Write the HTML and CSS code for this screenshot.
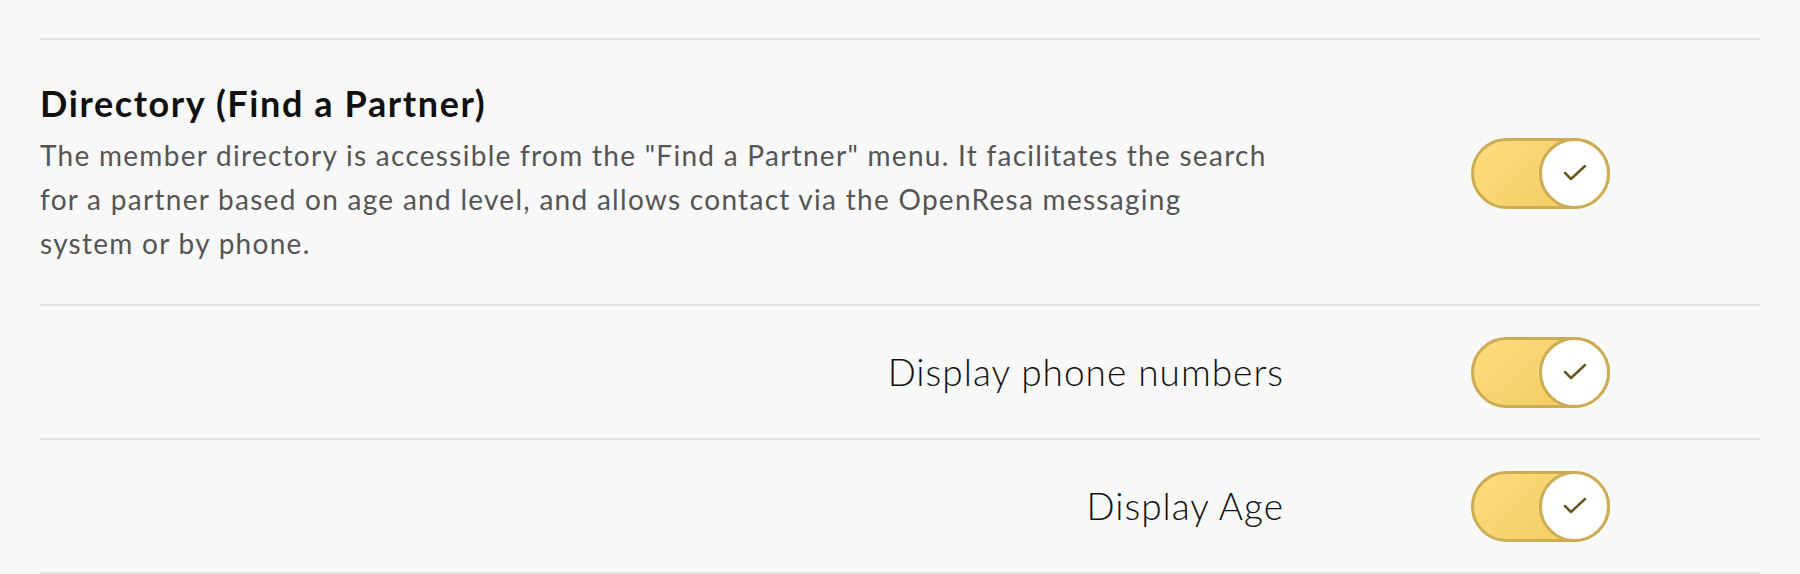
FILE: index.html
```html
<!DOCTYPE html>
<html lang="en">
<head>
<meta charset="utf-8">
<title>Directory settings</title>
<link rel="stylesheet" href="styles.css">
</head>
<body>
<div class="page">
  <section class="setting setting--main">
    <div class="setting__text">
      <h2 class="setting__title">Directory (Find a Partner)</h2>
      <p class="setting__desc">The member directory is accessible from the "Find a Partner" menu. It facilitates the search<br>for a partner based on age and level, and allows contact via the OpenResa messaging<br>system or by phone.</p>
    </div>
    <div class="switch" role="switch" aria-checked="true">
      <span class="switch__knob">
        <svg width="24" height="18" viewBox="0 0 24 18"><polyline points="2,9 8,15 22,2" fill="none" stroke="#6b5720" stroke-width="2.5" stroke-linecap="round" stroke-linejoin="round"/></svg>
      </span>
    </div>
  </section>
  <section class="setting setting--sub">
    <div class="setting__label">Display phone numbers</div>
    <div class="switch" role="switch" aria-checked="true">
      <span class="switch__knob">
        <svg width="24" height="18" viewBox="0 0 24 18"><polyline points="2,9 8,15 22,2" fill="none" stroke="#6b5720" stroke-width="2.5" stroke-linecap="round" stroke-linejoin="round"/></svg>
      </span>
    </div>
  </section>
  <section class="setting setting--sub setting--last">
    <div class="setting__label">Display Age</div>
    <div class="switch" role="switch" aria-checked="true">
      <span class="switch__knob">
        <svg width="24" height="18" viewBox="0 0 24 18"><polyline points="2,9 8,15 22,2" fill="none" stroke="#6b5720" stroke-width="2.5" stroke-linecap="round" stroke-linejoin="round"/></svg>
      </span>
    </div>
  </section>
</div>
</body>
</html>
```
FILE: styles.css
```css
html, body {
  margin: 0;
  padding: 0;
  background: #f8f8f8;
}

body {
  font-family: Lato, "Noto Sans", sans-serif;
  color: #111;
}

.page {
  padding: 38px 40px 0;
}

.setting {
  display: flex;
  align-items: center;
  border-top: 2px solid #e2e2e2;
}

.setting--last {
  border-bottom: 2px solid #e2e2e2;
}

.setting--main {
  padding: 41px 0 39px;
}

.setting--main .switch {
  margin-left: 189px;
}

.setting--sub {
  height: 132px;
}

.setting__text {
  width: 1242px;
  flex: none;
}

.setting__title {
  margin: 0;
  font-size: 36px;
  line-height: 44px;
  font-weight: 700;
  letter-spacing: 1.6px;
  color: #111;
}

.setting__desc {
  margin: 8px 0 0;
  font-size: 28px;
  line-height: 44px;
  font-weight: 400;
  letter-spacing: 1.28px;
  color: #555;
}

.setting__label {
  width: 1244px;
  flex: none;
  text-align: right;
  font-size: 37px;
  font-weight: 300;
  line-height: 44px;
  letter-spacing: 1px;
  color: #111;
}

.setting__label + .switch {
  margin-left: 187px;
}

.switch {
  width: 139px;
  height: 71px;
  box-sizing: border-box;
  border: 3px solid #ccad55;
  border-radius: 36px;
  background: linear-gradient(135deg, #fddd7e 0%, #f0c95e 100%);
  display: flex;
  justify-content: flex-end;
  align-items: center;
}

.switch__knob {
  width: 71px;
  height: 71px;
  margin: -3px;
  box-sizing: border-box;
  border: 3px solid #ccad55;
  border-radius: 50%;
  background: #fff;
  display: flex;
  align-items: center;
  justify-content: center;
}

.switch__knob svg {
  display: block;
}
```
